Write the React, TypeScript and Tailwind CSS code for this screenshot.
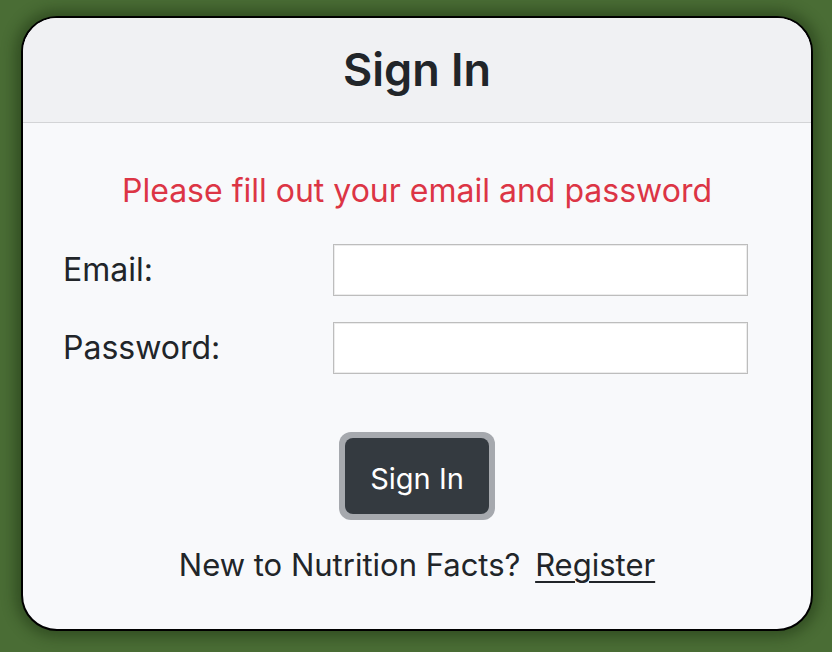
const SignIn = () => {
  return (
    <div className="flex h-[652px] w-full items-start justify-center bg-[#4a6d35] pl-[21px] pr-[19px] pt-[16px] font-['Inter',sans-serif]">
      <div className="flex h-[615px] w-full flex-col overflow-hidden rounded-[36px] border-2 border-black bg-[#f8f9fb] shadow-[0_0_14px_6px_rgba(20,40,10,0.45)]">
        <div className="flex h-[105px] items-center justify-center border-b border-[#d3d4d6] bg-[#f0f1f3]">
          <h1 className="text-[45px] font-semibold text-[#212529]">Sign In</h1>
        </div>

        <div className="flex flex-col items-center">
          <p className="mt-[44px] text-[32px] text-[#dc3545]">
            Please fill out your email and password
          </p>

          <div className="mt-[29px] grid w-full grid-cols-[270px_1fr] gap-y-[26px] pl-[40px] pr-[63px]">
            <label className="flex items-center text-[32px] text-[#212529]">
              Email:
            </label>
            <input
              type="email"
              className="h-[52px] border border-[#bdbdbd] bg-white shadow-[inset_0_0_0_1px_#ececec] outline-none"
            />
            <label className="flex items-center text-[32px] text-[#212529]">
              Password:
            </label>
            <input
              type="password"
              className="h-[52px] border border-[#bdbdbd] bg-white shadow-[inset_0_0_0_1px_#ececec] outline-none"
            />
          </div>

          <div className="mt-[58px] rounded-[12px] bg-[#a6a9ae] p-[6px]">
            <button
              type="button"
              className="h-[76px] w-[144px] rounded-[8px] bg-[#343a40] pt-[5px] text-[29px] text-white"
            >
              Sign In
            </button>
          </div>

          <p className="mt-[22px] text-[31px] text-[#212529]">
            New to Nutrition Facts?{" "}
            <a href="#" className="ml-[6px] underline underline-offset-[5px] decoration-2">
              Register
            </a>
          </p>
        </div>
      </div>
    </div>
  );
};

export default SignIn;
